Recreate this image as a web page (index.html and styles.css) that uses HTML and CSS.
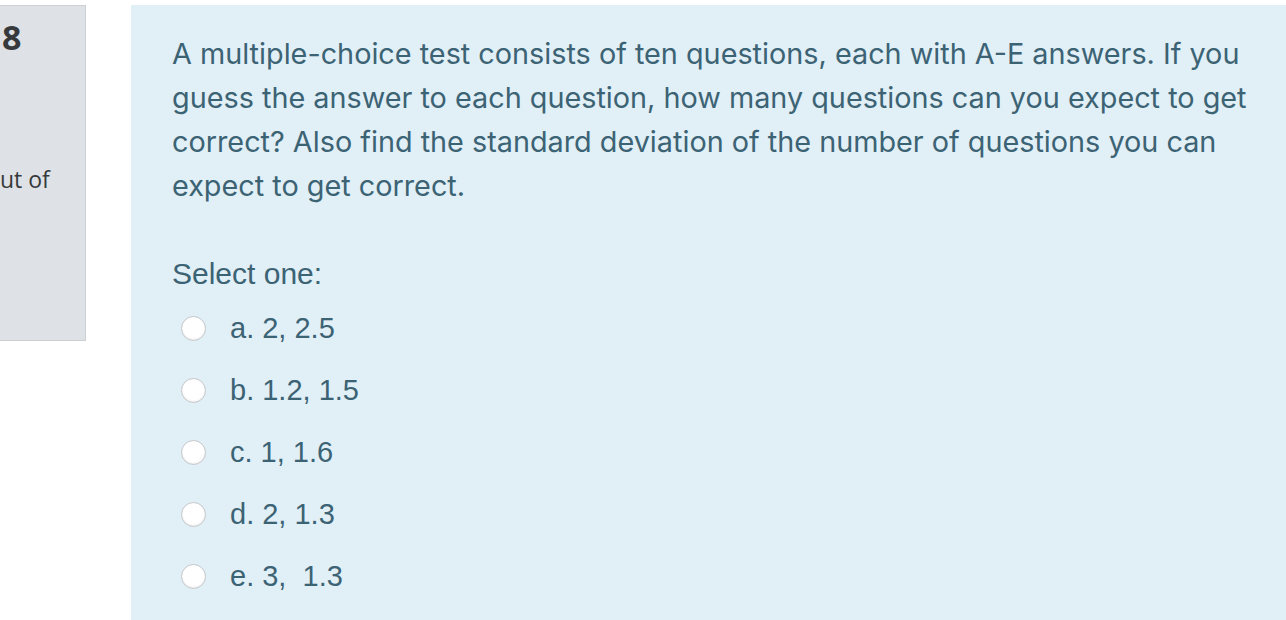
FILE: index.html
```html
<!DOCTYPE html>
<html>
<head>
<meta charset="utf-8">
<link rel="stylesheet" href="styles.css">
</head>
<body>
<div class="que">
  <div class="info">
    <h3 class="qno">8</h3>
    <div class="grade">ut of</div>
  </div>
  <div class="content">
    <div class="qtext">A multiple-choice test consists of ten questions, each with A-E answers. If you guess the answer to each question, how many questions can you expect to get correct? Also find the standard deviation of the number of questions you can expect to get correct.</div>
    <div class="prompt">Select one:</div>
    <div class="answers">
      <label class="opt"><span class="radio"></span><span>a. 2, 2.5</span></label>
      <label class="opt"><span class="radio"></span><span>b. 1.2, 1.5</span></label>
      <label class="opt"><span class="radio"></span><span>c. 1, 1.6</span></label>
      <label class="opt"><span class="radio"></span><span>d. 2, 1.3</span></label>
      <label class="opt"><span class="radio"></span><span>e. 3,&nbsp; 1.3</span></label>
    </div>
  </div>
</div>
</body>
</html>
```
FILE: styles.css
```css
html, body {
  margin: 0;
  padding: 0;
  background: #fff;
  height: 620px;
  overflow: hidden;
}
.que {
  display: flex;
  align-items: flex-start;
  padding-top: 5px;
  gap: 45px;
}
.info {
  width: 85px;
  height: 334px;
  flex: none;
  background: #dee2e6;
  border: 1px solid #cbd0d5;
  border-left: none;
  font-family: "Open Sans", "Liberation Sans", sans-serif;
  color: #373a3c;
  overflow: hidden;
}
.qno {
  margin: 11px 0 0 2px;
  font-size: 34px;
  font-weight: 700;
  line-height: 40px;
}
.grade {
  margin-top: 107px;
  font-size: 23px;
  line-height: 30px;
}
.content {
  flex: 1;
  box-sizing: border-box;
  height: 615px;
  background: #e1eff7;
  padding: 27px 28px 0 41px;
  color: #3c6374;
  font-family: Inter, "Liberation Sans", sans-serif;
}
.qtext {
  font-size: 28.8px;
  line-height: 44px;
}
.prompt {
  margin-top: 44px;
  font-family: "Liberation Sans", Arial, sans-serif;
  font-size: 30px;
  line-height: 44px;
}
.answers {
  display: flex;
  flex-direction: column;
  margin-top: 1px;
}
.opt {
  display: flex;
  align-items: center;
  height: 62px;
  font-family: "Liberation Sans", Arial, sans-serif;
  font-size: 29px;
}
.radio {
  width: 23px;
  height: 23px;
  border-radius: 50%;
  background: #fff;
  border: 1px solid #c4c7ca;
  box-shadow: inset 0 -1px 2px rgba(0,0,0,0.08);
  margin-left: 9px;
  margin-right: 24px;
  flex: none;
}
```
